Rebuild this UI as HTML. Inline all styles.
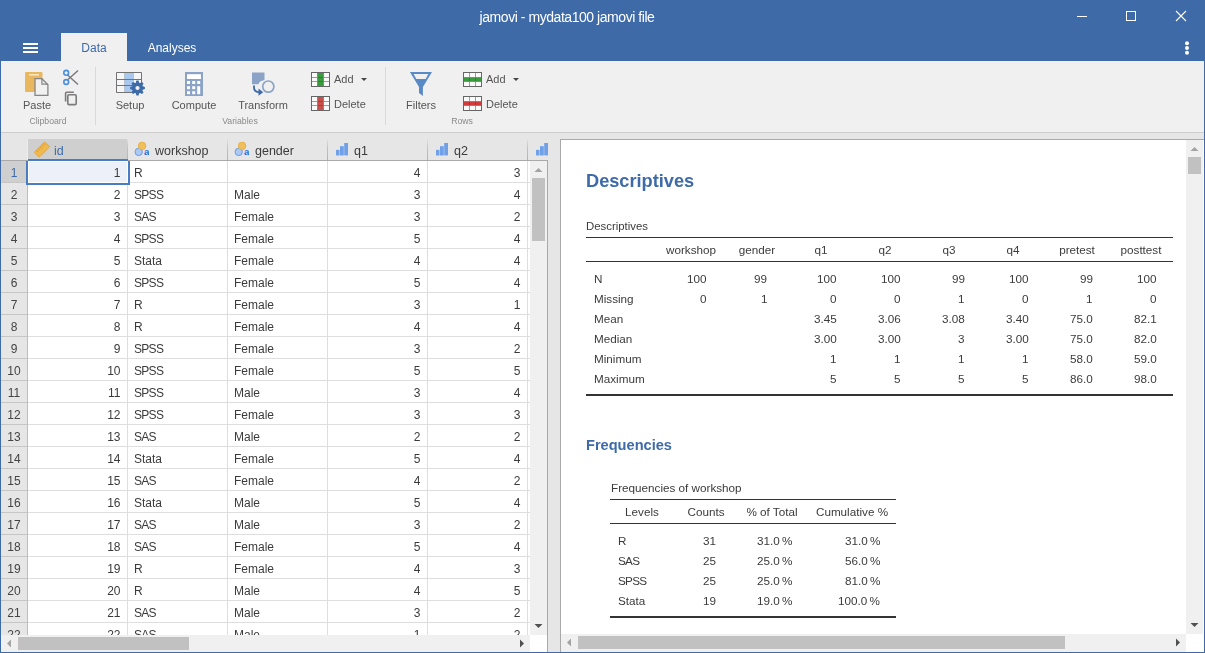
<!DOCTYPE html>
<html><head><meta charset="utf-8"><title>jamovi</title>
<style>
html,body{margin:0;padding:0;}
body{width:1205px;height:653px;overflow:hidden;position:relative;font-family:"Liberation Sans",sans-serif;}
.r{position:absolute;display:block;}
.t{position:absolute;white-space:pre;line-height:0;will-change:transform;}
</style></head><body>
<div class="r" style="left:0px;top:0px;width:1205px;height:653px;background:#3e6ba8;"></div>
<div class="t" style="left:567px;transform:translateX(-50%);top:17px;font-size:14px;color:#fff;font-weight:normal;letter-spacing:-0.45px;">jamovi - mydata100 jamovi file</div>
<div class="r" style="left:1077px;top:16px;width:10px;height:1px;background:#fff;"></div>
<div class="r" style="left:1126px;top:11px;width:10px;height:10px;background:transparent;border:1px solid #fff;box-sizing:border-box;"></div>
<svg class="r" style="left:1175px;top:10px" width="12" height="12" viewBox="0 0 12 12"><path d="M1 1 L11 11 M11 1 L1 11" stroke="#fff" stroke-width="1.1"/></svg>
<svg class="r" style="left:1183px;top:38px" width="8" height="20" viewBox="0 0 8 20"><circle cx="4" cy="5.3" r="2" fill="#fff"/><circle cx="4" cy="10" r="2" fill="#fff"/><circle cx="4" cy="14.8" r="2" fill="#fff"/></svg>
<div class="r" style="left:23px;top:43px;width:15px;height:2px;background:#fff;"></div>
<div class="r" style="left:23px;top:47px;width:15px;height:2px;background:#fff;"></div>
<div class="r" style="left:23px;top:51px;width:15px;height:2px;background:#fff;"></div>
<div class="r" style="left:61px;top:33px;width:66px;height:28px;background:#f0f0f0;"></div>
<div class="t" style="left:94px;transform:translateX(-50%);top:48px;font-size:12px;color:#3e6ba8;font-weight:normal;">Data</div>
<div class="t" style="left:172px;transform:translateX(-50%);top:48px;font-size:12px;color:#fff;font-weight:normal;">Analyses</div>
<div class="r" style="left:1px;top:61px;width:1203px;height:71px;background:#f0f0f0;"></div>
<div class="r" style="left:1px;top:132px;width:1203px;height:1px;background:#cdcdcd;"></div>
<div class="r" style="left:1px;top:133px;width:1203px;height:519px;background:#e6e6e6;"></div>
<div class="r" style="left:95px;top:67px;width:1px;height:58px;background:#d9d9d9;"></div>
<div class="r" style="left:385px;top:67px;width:1px;height:58px;background:#d9d9d9;"></div>
<svg class="r" style="left:24px;top:71px" width="26" height="27" viewBox="0 0 26 27"><rect x="1" y="1" width="17.5" height="20" rx="1" fill="#e9b75e"/><rect x="5" y="3" width="10" height="1.6" fill="#f8e4bd"/><path d="M11 7.7 H17.9 L23.9 13.7 V24.3 H11 Z" fill="#f1f1f1" stroke="#858585" stroke-width="1.3"/><path d="M17.9 7.7 V13.2 H23.9" fill="none" stroke="#858585" stroke-width="1.2"/></svg>
<div class="t" style="left:37px;transform:translateX(-50%);top:105px;font-size:11px;color:#555;font-weight:normal;">Paste</div>
<div class="t" style="left:48px;transform:translateX(-50%);top:121px;font-size:8.7px;color:#8a8a8a;font-weight:normal;">Clipboard</div>
<svg class="r" style="left:62px;top:69px" width="18" height="17" viewBox="0 0 18 17"><path d="M5.5 6 L16 15.5 M5.5 11 L16 1.5" stroke="#777" stroke-width="1.4" fill="none"/><circle cx="4.2" cy="3.8" r="2.4" fill="#f0f0f0" stroke="#4a8fe0" stroke-width="1.6"/><circle cx="4.2" cy="13" r="2.4" fill="#f0f0f0" stroke="#4a8fe0" stroke-width="1.6"/></svg>
<svg class="r" style="left:63px;top:90px" width="16" height="17" viewBox="0 0 16 17"><path d="M2.6 11.4 V3.2 Q2.6 2.2 3.6 2.2 H10.8" fill="none" stroke="#7b7b7b" stroke-width="1.6"/><rect x="4.8" y="4.8" width="8.4" height="9.8" rx="1.2" fill="none" stroke="#7b7b7b" stroke-width="1.6"/></svg>
<svg class="r" style="left:115px;top:71px" width="32" height="27" viewBox="0 0 32 27"><rect x="1.5" y="1.5" width="25" height="20" fill="#f6f6f6"/><path d="M10 1.5 V21.5 M18 1.5 V21.5" fill="none" stroke="#8a8a8a" stroke-width="1"/><rect x="9.7" y="1.5" width="8.6" height="20" fill="#a9c8f0"/><path d="M1.5 1.5 H26.5 V21.5 H1.5 Z M1.5 8.5 H26.5 M1.5 14.5 H26.5" fill="none" stroke="#737373" stroke-width="1"/><g transform="translate(22.5 17)"><circle r="5.4" fill="#3e6ba8"/><path d="M-1.9 -4.5 L-1.1 -7.4 H1.1 L1.9 -4.5 Z" fill="#3e6ba8" transform="rotate(0)"/><path d="M-1.9 -4.5 L-1.1 -7.4 H1.1 L1.9 -4.5 Z" fill="#3e6ba8" transform="rotate(45)"/><path d="M-1.9 -4.5 L-1.1 -7.4 H1.1 L1.9 -4.5 Z" fill="#3e6ba8" transform="rotate(90)"/><path d="M-1.9 -4.5 L-1.1 -7.4 H1.1 L1.9 -4.5 Z" fill="#3e6ba8" transform="rotate(135)"/><path d="M-1.9 -4.5 L-1.1 -7.4 H1.1 L1.9 -4.5 Z" fill="#3e6ba8" transform="rotate(180)"/><path d="M-1.9 -4.5 L-1.1 -7.4 H1.1 L1.9 -4.5 Z" fill="#3e6ba8" transform="rotate(225)"/><path d="M-1.9 -4.5 L-1.1 -7.4 H1.1 L1.9 -4.5 Z" fill="#3e6ba8" transform="rotate(270)"/><path d="M-1.9 -4.5 L-1.1 -7.4 H1.1 L1.9 -4.5 Z" fill="#3e6ba8" transform="rotate(315)"/><circle r="2.1" fill="#f0f0f0"/></g></svg>
<div class="t" style="left:130px;transform:translateX(-50%);top:105px;font-size:11px;color:#555;font-weight:normal;">Setup</div>
<svg class="r" style="left:184px;top:71px" width="20" height="26" viewBox="0 0 20 26"><rect x="1" y="1" width="18" height="24" fill="#8ba3c7"/><rect x="3" y="3.2" width="14" height="4.8" fill="#fff"/><rect x="3" y="10" width="3" height="3" fill="#fff"/><rect x="8.2" y="10" width="3" height="3" fill="#fff"/><rect x="13.2" y="10" width="3" height="3" fill="#fff"/><rect x="3" y="15.2" width="3" height="3" fill="#fff"/><rect x="8.2" y="15.2" width="3" height="3" fill="#fff"/><rect x="13.2" y="15.2" width="3" height="8" fill="#fff"/><rect x="3" y="20.2" width="3" height="3" fill="#fff"/><rect x="8.2" y="20.2" width="3" height="3" fill="#fff"/></svg>
<div class="t" style="left:193.5px;transform:translateX(-50%);top:105px;font-size:11px;color:#555;font-weight:normal;">Compute</div>
<svg class="r" style="left:250px;top:71px" width="26" height="27" viewBox="0 0 26 27"><path d="M2 1.5 H14.5 V9 Q9 10 8.5 13.2 H2 Z" fill="#8ba3c7"/><circle cx="18.3" cy="15.6" r="5.6" fill="#f0f0f0" stroke="#8ba3c7" stroke-width="1.7"/><path d="M4 14.5 V16.5 Q4 21 9.5 21.3" fill="none" stroke="#3e6ba8" stroke-width="1.8"/><path d="M8.5 17.6 L13.2 21.3 L8.5 24.8 Z" fill="#3e6ba8"/></svg>
<div class="t" style="left:262.5px;transform:translateX(-50%);top:105px;font-size:11px;color:#555;font-weight:normal;">Transform</div>
<div class="t" style="left:240px;transform:translateX(-50%);top:121px;font-size:8.7px;color:#8a8a8a;font-weight:normal;">Variables</div>
<svg class="r" style="left:311px;top:72px" width="20" height="16" viewBox="0 0 20 16"><rect x="0.5" y="0.5" width="18" height="14" fill="#fafafa"/><path d="M0.5 5.5 H18.5 M0.5 9.5 H18.5" stroke="#9d9d9d" stroke-width="1"/><rect x="7" y="0.5" width="5" height="14" fill="#3c9b3f"/><path d="M7 5.5 H12 M7 9.5 H12" stroke="rgba(0,0,0,0.2)" stroke-width="1"/><path d="M6.5 0.5 V14.5 M12.5 0.5 V14.5" stroke="#858585" stroke-width="1"/><rect x="0.5" y="0.5" width="18" height="14" fill="none" stroke="#666" stroke-width="1"/></svg>
<div class="t" style="left:333.8px;top:79px;font-size:11px;color:#555;font-weight:normal;">Add</div>
<svg class="r" style="left:361px;top:78px" width="6" height="4" viewBox="0 0 6 4"><path d="M0 0 H6 L3 3 Z" fill="#444"/></svg>
<svg class="r" style="left:311px;top:96px" width="20" height="16" viewBox="0 0 20 16"><rect x="0.5" y="0.5" width="18" height="14" fill="#fafafa"/><path d="M0.5 5.5 H18.5 M0.5 9.5 H18.5" stroke="#9d9d9d" stroke-width="1"/><rect x="7" y="0.5" width="5" height="14" fill="#c9514b"/><path d="M7 5.5 H12 M7 9.5 H12" stroke="rgba(0,0,0,0.2)" stroke-width="1"/><path d="M6.5 0.5 V14.5 M12.5 0.5 V14.5" stroke="#858585" stroke-width="1"/><rect x="0.5" y="0.5" width="18" height="14" fill="none" stroke="#666" stroke-width="1"/></svg>
<div class="t" style="left:333.8px;top:104px;font-size:11px;color:#555;font-weight:normal;">Delete</div>
<svg class="r" style="left:409px;top:71px" width="25" height="27" viewBox="0 0 25 27"><path d="M0.9 0.9 H23 L13.9 15.9 V24.9 L10 22 V15.9 Z" fill="#5a8ac6"/><path d="M4.6 3 H19.3 L16.7 7.9 H7.4 Z" fill="#f0f0f0"/></svg>
<div class="t" style="left:421px;transform:translateX(-50%);top:105px;font-size:11px;color:#555;font-weight:normal;">Filters</div>
<svg class="r" style="left:463px;top:72px" width="20" height="16" viewBox="0 0 20 16"><rect x="0.5" y="0.5" width="18" height="14" fill="#fafafa"/><path d="M6.5 0.5 V14.5 M12.5 0.5 V14.5" stroke="#9d9d9d" stroke-width="1"/><rect x="0.5" y="6" width="18" height="3" fill="#3c9b3f"/><path d="M6.5 6 V9 M12.5 6 V9" stroke="rgba(0,0,0,0.2)" stroke-width="1"/><path d="M0.5 5.5 H18.5 M0.5 9.5 H18.5" stroke="#858585" stroke-width="1"/><rect x="0.5" y="0.5" width="18" height="14" fill="none" stroke="#666" stroke-width="1"/></svg>
<div class="t" style="left:486.4px;top:79px;font-size:11px;color:#555;font-weight:normal;">Add</div>
<svg class="r" style="left:513px;top:78px" width="6" height="4" viewBox="0 0 6 4"><path d="M0 0 H6 L3 3 Z" fill="#444"/></svg>
<svg class="r" style="left:463px;top:96px" width="20" height="16" viewBox="0 0 20 16"><rect x="0.5" y="0.5" width="18" height="14" fill="#fafafa"/><path d="M6.5 0.5 V14.5 M12.5 0.5 V14.5" stroke="#9d9d9d" stroke-width="1"/><rect x="0.5" y="6" width="18" height="3" fill="#d03c3c"/><path d="M6.5 6 V9 M12.5 6 V9" stroke="rgba(0,0,0,0.2)" stroke-width="1"/><path d="M0.5 5.5 H18.5 M0.5 9.5 H18.5" stroke="#858585" stroke-width="1"/><rect x="0.5" y="0.5" width="18" height="14" fill="none" stroke="#666" stroke-width="1"/></svg>
<div class="t" style="left:486.4px;top:104px;font-size:11px;color:#555;font-weight:normal;">Delete</div>
<div class="t" style="left:462px;transform:translateX(-50%);top:121px;font-size:8.7px;color:#8a8a8a;font-weight:normal;">Rows</div>
<div class="r" style="left:1px;top:139px;width:546px;height:21px;background:#e6e6e6;"></div>
<div class="r" style="left:28px;top:139px;width:99px;height:21px;background:#cfcfcf;"></div>
<div class="r" style="left:127px;top:139px;width:1px;height:21px;background:linear-gradient(to bottom,#e2e2e2,#c2c2c2 40%,#b4b4b4);"></div>
<div class="r" style="left:227px;top:139px;width:1px;height:21px;background:linear-gradient(to bottom,#e2e2e2,#c2c2c2 40%,#b4b4b4);"></div>
<div class="r" style="left:327px;top:139px;width:1px;height:21px;background:linear-gradient(to bottom,#e2e2e2,#c2c2c2 40%,#b4b4b4);"></div>
<div class="r" style="left:427px;top:139px;width:1px;height:21px;background:linear-gradient(to bottom,#e2e2e2,#c2c2c2 40%,#b4b4b4);"></div>
<div class="r" style="left:527px;top:139px;width:1px;height:21px;background:linear-gradient(to bottom,#e2e2e2,#c2c2c2 40%,#b4b4b4);"></div>
<div class="r" style="left:1px;top:160px;width:547px;height:1px;background:#a9a9a9;"></div>
<div class="r" style="left:28px;top:161px;width:502px;height:474px;background:#fff;"></div>
<div class="r" style="left:1px;top:161px;width:26px;height:474px;background:#e6e6e6;"></div>
<div class="r" style="left:1px;top:161px;width:26px;height:21px;background:#cfcfcf;"></div>
<div class="r" style="left:27px;top:161px;width:1px;height:474px;background:#bdbdbd;"></div>
<div class="r" style="left:28px;top:182px;width:502px;height:1px;background:#dedede;"></div>
<div class="r" style="left:1px;top:182px;width:26px;height:1px;background:#c6c6c6;"></div>
<div class="r" style="left:28px;top:204px;width:502px;height:1px;background:#dedede;"></div>
<div class="r" style="left:1px;top:204px;width:26px;height:1px;background:#c6c6c6;"></div>
<div class="r" style="left:28px;top:226px;width:502px;height:1px;background:#dedede;"></div>
<div class="r" style="left:1px;top:226px;width:26px;height:1px;background:#c6c6c6;"></div>
<div class="r" style="left:28px;top:248px;width:502px;height:1px;background:#dedede;"></div>
<div class="r" style="left:1px;top:248px;width:26px;height:1px;background:#c6c6c6;"></div>
<div class="r" style="left:28px;top:270px;width:502px;height:1px;background:#dedede;"></div>
<div class="r" style="left:1px;top:270px;width:26px;height:1px;background:#c6c6c6;"></div>
<div class="r" style="left:28px;top:292px;width:502px;height:1px;background:#dedede;"></div>
<div class="r" style="left:1px;top:292px;width:26px;height:1px;background:#c6c6c6;"></div>
<div class="r" style="left:28px;top:314px;width:502px;height:1px;background:#dedede;"></div>
<div class="r" style="left:1px;top:314px;width:26px;height:1px;background:#c6c6c6;"></div>
<div class="r" style="left:28px;top:336px;width:502px;height:1px;background:#dedede;"></div>
<div class="r" style="left:1px;top:336px;width:26px;height:1px;background:#c6c6c6;"></div>
<div class="r" style="left:28px;top:358px;width:502px;height:1px;background:#dedede;"></div>
<div class="r" style="left:1px;top:358px;width:26px;height:1px;background:#c6c6c6;"></div>
<div class="r" style="left:28px;top:380px;width:502px;height:1px;background:#dedede;"></div>
<div class="r" style="left:1px;top:380px;width:26px;height:1px;background:#c6c6c6;"></div>
<div class="r" style="left:28px;top:402px;width:502px;height:1px;background:#dedede;"></div>
<div class="r" style="left:1px;top:402px;width:26px;height:1px;background:#c6c6c6;"></div>
<div class="r" style="left:28px;top:424px;width:502px;height:1px;background:#dedede;"></div>
<div class="r" style="left:1px;top:424px;width:26px;height:1px;background:#c6c6c6;"></div>
<div class="r" style="left:28px;top:446px;width:502px;height:1px;background:#dedede;"></div>
<div class="r" style="left:1px;top:446px;width:26px;height:1px;background:#c6c6c6;"></div>
<div class="r" style="left:28px;top:468px;width:502px;height:1px;background:#dedede;"></div>
<div class="r" style="left:1px;top:468px;width:26px;height:1px;background:#c6c6c6;"></div>
<div class="r" style="left:28px;top:490px;width:502px;height:1px;background:#dedede;"></div>
<div class="r" style="left:1px;top:490px;width:26px;height:1px;background:#c6c6c6;"></div>
<div class="r" style="left:28px;top:512px;width:502px;height:1px;background:#dedede;"></div>
<div class="r" style="left:1px;top:512px;width:26px;height:1px;background:#c6c6c6;"></div>
<div class="r" style="left:28px;top:534px;width:502px;height:1px;background:#dedede;"></div>
<div class="r" style="left:1px;top:534px;width:26px;height:1px;background:#c6c6c6;"></div>
<div class="r" style="left:28px;top:556px;width:502px;height:1px;background:#dedede;"></div>
<div class="r" style="left:1px;top:556px;width:26px;height:1px;background:#c6c6c6;"></div>
<div class="r" style="left:28px;top:578px;width:502px;height:1px;background:#dedede;"></div>
<div class="r" style="left:1px;top:578px;width:26px;height:1px;background:#c6c6c6;"></div>
<div class="r" style="left:28px;top:600px;width:502px;height:1px;background:#dedede;"></div>
<div class="r" style="left:1px;top:600px;width:26px;height:1px;background:#c6c6c6;"></div>
<div class="r" style="left:28px;top:622px;width:502px;height:1px;background:#dedede;"></div>
<div class="r" style="left:1px;top:622px;width:26px;height:1px;background:#c6c6c6;"></div>
<div class="r" style="left:28px;top:644px;width:502px;height:1px;background:#dedede;"></div>
<div class="r" style="left:1px;top:644px;width:26px;height:1px;background:#c6c6c6;"></div>
<div class="r" style="left:127px;top:161px;width:1px;height:474px;background:#dedede;"></div>
<div class="r" style="left:227px;top:161px;width:1px;height:474px;background:#dedede;"></div>
<div class="r" style="left:327px;top:161px;width:1px;height:474px;background:#dedede;"></div>
<div class="r" style="left:427px;top:161px;width:1px;height:474px;background:#dedede;"></div>
<div class="r" style="left:527px;top:161px;width:1px;height:474px;background:#dedede;"></div>
<div class="r" style="left:28px;top:161px;width:99px;height:21px;background:#ebf0f9;"></div>
<div class="r" style="left:28px;top:159px;width:100px;height:2px;background:#4a7cc4;"></div>
<div class="r" style="left:26px;top:161px;width:2px;height:24px;background:#4a7cc4;"></div>
<div class="r" style="left:26px;top:183px;width:104px;height:2px;background:#4a7cc4;"></div>
<div class="r" style="left:128px;top:161px;width:2px;height:24px;background:#4a7cc4;"></div>
<div class="r" style="left:27px;top:139px;width:1px;height:21px;background:#ececec;"></div>
<div class="r" style="left:28px;top:161px;width:100px;height:22px;border:1px solid #fff;box-sizing:border-box;"></div>
<div class="r" style="left:0;top:161px;width:530px;height:474px;overflow:hidden">
<div class="t" style="left:14px;transform:translateX(-50%);top:12px;font-size:12px;color:#3e6ba8;font-weight:normal;">1</div>
<div class="t" style="right:1084.5px;top:12px;font-size:12px;color:#3b3b3b;font-weight:normal;right:auto;left:0;width:120.5px;text-align:right;">1</div>
<div class="t" style="left:133.8px;top:12px;font-size:12px;color:#3b3b3b;font-weight:normal;">R</div>
<div class="t" style="right:784.5px;top:12px;font-size:12px;color:#3b3b3b;font-weight:normal;right:auto;left:0;width:420.5px;text-align:right;">4</div>
<div class="t" style="right:684.5px;top:12px;font-size:12px;color:#3b3b3b;font-weight:normal;right:auto;left:0;width:520.5px;text-align:right;">3</div>
<div class="t" style="left:14px;transform:translateX(-50%);top:34px;font-size:12px;color:#444;font-weight:normal;">2</div>
<div class="t" style="right:1084.5px;top:34px;font-size:12px;color:#3b3b3b;font-weight:normal;right:auto;left:0;width:120.5px;text-align:right;">2</div>
<div class="t" style="left:133.8px;top:34px;font-size:12px;color:#3b3b3b;font-weight:normal;letter-spacing:-0.7px;">SPSS</div>
<div class="t" style="left:233.8px;top:34px;font-size:12px;color:#3b3b3b;font-weight:normal;">Male</div>
<div class="t" style="right:784.5px;top:34px;font-size:12px;color:#3b3b3b;font-weight:normal;right:auto;left:0;width:420.5px;text-align:right;">3</div>
<div class="t" style="right:684.5px;top:34px;font-size:12px;color:#3b3b3b;font-weight:normal;right:auto;left:0;width:520.5px;text-align:right;">4</div>
<div class="t" style="left:14px;transform:translateX(-50%);top:56px;font-size:12px;color:#444;font-weight:normal;">3</div>
<div class="t" style="right:1084.5px;top:56px;font-size:12px;color:#3b3b3b;font-weight:normal;right:auto;left:0;width:120.5px;text-align:right;">3</div>
<div class="t" style="left:133.8px;top:56px;font-size:12px;color:#3b3b3b;font-weight:normal;letter-spacing:-0.7px;">SAS</div>
<div class="t" style="left:233.8px;top:56px;font-size:12px;color:#3b3b3b;font-weight:normal;">Female</div>
<div class="t" style="right:784.5px;top:56px;font-size:12px;color:#3b3b3b;font-weight:normal;right:auto;left:0;width:420.5px;text-align:right;">3</div>
<div class="t" style="right:684.5px;top:56px;font-size:12px;color:#3b3b3b;font-weight:normal;right:auto;left:0;width:520.5px;text-align:right;">2</div>
<div class="t" style="left:14px;transform:translateX(-50%);top:78px;font-size:12px;color:#444;font-weight:normal;">4</div>
<div class="t" style="right:1084.5px;top:78px;font-size:12px;color:#3b3b3b;font-weight:normal;right:auto;left:0;width:120.5px;text-align:right;">4</div>
<div class="t" style="left:133.8px;top:78px;font-size:12px;color:#3b3b3b;font-weight:normal;letter-spacing:-0.7px;">SPSS</div>
<div class="t" style="left:233.8px;top:78px;font-size:12px;color:#3b3b3b;font-weight:normal;">Female</div>
<div class="t" style="right:784.5px;top:78px;font-size:12px;color:#3b3b3b;font-weight:normal;right:auto;left:0;width:420.5px;text-align:right;">5</div>
<div class="t" style="right:684.5px;top:78px;font-size:12px;color:#3b3b3b;font-weight:normal;right:auto;left:0;width:520.5px;text-align:right;">4</div>
<div class="t" style="left:14px;transform:translateX(-50%);top:100px;font-size:12px;color:#444;font-weight:normal;">5</div>
<div class="t" style="right:1084.5px;top:100px;font-size:12px;color:#3b3b3b;font-weight:normal;right:auto;left:0;width:120.5px;text-align:right;">5</div>
<div class="t" style="left:133.8px;top:100px;font-size:12px;color:#3b3b3b;font-weight:normal;">Stata</div>
<div class="t" style="left:233.8px;top:100px;font-size:12px;color:#3b3b3b;font-weight:normal;">Female</div>
<div class="t" style="right:784.5px;top:100px;font-size:12px;color:#3b3b3b;font-weight:normal;right:auto;left:0;width:420.5px;text-align:right;">4</div>
<div class="t" style="right:684.5px;top:100px;font-size:12px;color:#3b3b3b;font-weight:normal;right:auto;left:0;width:520.5px;text-align:right;">4</div>
<div class="t" style="left:14px;transform:translateX(-50%);top:122px;font-size:12px;color:#444;font-weight:normal;">6</div>
<div class="t" style="right:1084.5px;top:122px;font-size:12px;color:#3b3b3b;font-weight:normal;right:auto;left:0;width:120.5px;text-align:right;">6</div>
<div class="t" style="left:133.8px;top:122px;font-size:12px;color:#3b3b3b;font-weight:normal;letter-spacing:-0.7px;">SPSS</div>
<div class="t" style="left:233.8px;top:122px;font-size:12px;color:#3b3b3b;font-weight:normal;">Female</div>
<div class="t" style="right:784.5px;top:122px;font-size:12px;color:#3b3b3b;font-weight:normal;right:auto;left:0;width:420.5px;text-align:right;">5</div>
<div class="t" style="right:684.5px;top:122px;font-size:12px;color:#3b3b3b;font-weight:normal;right:auto;left:0;width:520.5px;text-align:right;">4</div>
<div class="t" style="left:14px;transform:translateX(-50%);top:144px;font-size:12px;color:#444;font-weight:normal;">7</div>
<div class="t" style="right:1084.5px;top:144px;font-size:12px;color:#3b3b3b;font-weight:normal;right:auto;left:0;width:120.5px;text-align:right;">7</div>
<div class="t" style="left:133.8px;top:144px;font-size:12px;color:#3b3b3b;font-weight:normal;">R</div>
<div class="t" style="left:233.8px;top:144px;font-size:12px;color:#3b3b3b;font-weight:normal;">Female</div>
<div class="t" style="right:784.5px;top:144px;font-size:12px;color:#3b3b3b;font-weight:normal;right:auto;left:0;width:420.5px;text-align:right;">3</div>
<div class="t" style="right:684.5px;top:144px;font-size:12px;color:#3b3b3b;font-weight:normal;right:auto;left:0;width:520.5px;text-align:right;">1</div>
<div class="t" style="left:14px;transform:translateX(-50%);top:166px;font-size:12px;color:#444;font-weight:normal;">8</div>
<div class="t" style="right:1084.5px;top:166px;font-size:12px;color:#3b3b3b;font-weight:normal;right:auto;left:0;width:120.5px;text-align:right;">8</div>
<div class="t" style="left:133.8px;top:166px;font-size:12px;color:#3b3b3b;font-weight:normal;">R</div>
<div class="t" style="left:233.8px;top:166px;font-size:12px;color:#3b3b3b;font-weight:normal;">Female</div>
<div class="t" style="right:784.5px;top:166px;font-size:12px;color:#3b3b3b;font-weight:normal;right:auto;left:0;width:420.5px;text-align:right;">4</div>
<div class="t" style="right:684.5px;top:166px;font-size:12px;color:#3b3b3b;font-weight:normal;right:auto;left:0;width:520.5px;text-align:right;">4</div>
<div class="t" style="left:14px;transform:translateX(-50%);top:188px;font-size:12px;color:#444;font-weight:normal;">9</div>
<div class="t" style="right:1084.5px;top:188px;font-size:12px;color:#3b3b3b;font-weight:normal;right:auto;left:0;width:120.5px;text-align:right;">9</div>
<div class="t" style="left:133.8px;top:188px;font-size:12px;color:#3b3b3b;font-weight:normal;letter-spacing:-0.7px;">SPSS</div>
<div class="t" style="left:233.8px;top:188px;font-size:12px;color:#3b3b3b;font-weight:normal;">Female</div>
<div class="t" style="right:784.5px;top:188px;font-size:12px;color:#3b3b3b;font-weight:normal;right:auto;left:0;width:420.5px;text-align:right;">3</div>
<div class="t" style="right:684.5px;top:188px;font-size:12px;color:#3b3b3b;font-weight:normal;right:auto;left:0;width:520.5px;text-align:right;">2</div>
<div class="t" style="left:14px;transform:translateX(-50%);top:210px;font-size:12px;color:#444;font-weight:normal;">10</div>
<div class="t" style="right:1084.5px;top:210px;font-size:12px;color:#3b3b3b;font-weight:normal;right:auto;left:0;width:120.5px;text-align:right;">10</div>
<div class="t" style="left:133.8px;top:210px;font-size:12px;color:#3b3b3b;font-weight:normal;letter-spacing:-0.7px;">SPSS</div>
<div class="t" style="left:233.8px;top:210px;font-size:12px;color:#3b3b3b;font-weight:normal;">Female</div>
<div class="t" style="right:784.5px;top:210px;font-size:12px;color:#3b3b3b;font-weight:normal;right:auto;left:0;width:420.5px;text-align:right;">5</div>
<div class="t" style="right:684.5px;top:210px;font-size:12px;color:#3b3b3b;font-weight:normal;right:auto;left:0;width:520.5px;text-align:right;">5</div>
<div class="t" style="left:14px;transform:translateX(-50%);top:232px;font-size:12px;color:#444;font-weight:normal;">11</div>
<div class="t" style="right:1084.5px;top:232px;font-size:12px;color:#3b3b3b;font-weight:normal;right:auto;left:0;width:120.5px;text-align:right;">11</div>
<div class="t" style="left:133.8px;top:232px;font-size:12px;color:#3b3b3b;font-weight:normal;letter-spacing:-0.7px;">SPSS</div>
<div class="t" style="left:233.8px;top:232px;font-size:12px;color:#3b3b3b;font-weight:normal;">Male</div>
<div class="t" style="right:784.5px;top:232px;font-size:12px;color:#3b3b3b;font-weight:normal;right:auto;left:0;width:420.5px;text-align:right;">3</div>
<div class="t" style="right:684.5px;top:232px;font-size:12px;color:#3b3b3b;font-weight:normal;right:auto;left:0;width:520.5px;text-align:right;">4</div>
<div class="t" style="left:14px;transform:translateX(-50%);top:254px;font-size:12px;color:#444;font-weight:normal;">12</div>
<div class="t" style="right:1084.5px;top:254px;font-size:12px;color:#3b3b3b;font-weight:normal;right:auto;left:0;width:120.5px;text-align:right;">12</div>
<div class="t" style="left:133.8px;top:254px;font-size:12px;color:#3b3b3b;font-weight:normal;letter-spacing:-0.7px;">SPSS</div>
<div class="t" style="left:233.8px;top:254px;font-size:12px;color:#3b3b3b;font-weight:normal;">Female</div>
<div class="t" style="right:784.5px;top:254px;font-size:12px;color:#3b3b3b;font-weight:normal;right:auto;left:0;width:420.5px;text-align:right;">3</div>
<div class="t" style="right:684.5px;top:254px;font-size:12px;color:#3b3b3b;font-weight:normal;right:auto;left:0;width:520.5px;text-align:right;">3</div>
<div class="t" style="left:14px;transform:translateX(-50%);top:276px;font-size:12px;color:#444;font-weight:normal;">13</div>
<div class="t" style="right:1084.5px;top:276px;font-size:12px;color:#3b3b3b;font-weight:normal;right:auto;left:0;width:120.5px;text-align:right;">13</div>
<div class="t" style="left:133.8px;top:276px;font-size:12px;color:#3b3b3b;font-weight:normal;letter-spacing:-0.7px;">SAS</div>
<div class="t" style="left:233.8px;top:276px;font-size:12px;color:#3b3b3b;font-weight:normal;">Male</div>
<div class="t" style="right:784.5px;top:276px;font-size:12px;color:#3b3b3b;font-weight:normal;right:auto;left:0;width:420.5px;text-align:right;">2</div>
<div class="t" style="right:684.5px;top:276px;font-size:12px;color:#3b3b3b;font-weight:normal;right:auto;left:0;width:520.5px;text-align:right;">2</div>
<div class="t" style="left:14px;transform:translateX(-50%);top:298px;font-size:12px;color:#444;font-weight:normal;">14</div>
<div class="t" style="right:1084.5px;top:298px;font-size:12px;color:#3b3b3b;font-weight:normal;right:auto;left:0;width:120.5px;text-align:right;">14</div>
<div class="t" style="left:133.8px;top:298px;font-size:12px;color:#3b3b3b;font-weight:normal;">Stata</div>
<div class="t" style="left:233.8px;top:298px;font-size:12px;color:#3b3b3b;font-weight:normal;">Female</div>
<div class="t" style="right:784.5px;top:298px;font-size:12px;color:#3b3b3b;font-weight:normal;right:auto;left:0;width:420.5px;text-align:right;">5</div>
<div class="t" style="right:684.5px;top:298px;font-size:12px;color:#3b3b3b;font-weight:normal;right:auto;left:0;width:520.5px;text-align:right;">4</div>
<div class="t" style="left:14px;transform:translateX(-50%);top:320px;font-size:12px;color:#444;font-weight:normal;">15</div>
<div class="t" style="right:1084.5px;top:320px;font-size:12px;color:#3b3b3b;font-weight:normal;right:auto;left:0;width:120.5px;text-align:right;">15</div>
<div class="t" style="left:133.8px;top:320px;font-size:12px;color:#3b3b3b;font-weight:normal;letter-spacing:-0.7px;">SAS</div>
<div class="t" style="left:233.8px;top:320px;font-size:12px;color:#3b3b3b;font-weight:normal;">Female</div>
<div class="t" style="right:784.5px;top:320px;font-size:12px;color:#3b3b3b;font-weight:normal;right:auto;left:0;width:420.5px;text-align:right;">4</div>
<div class="t" style="right:684.5px;top:320px;font-size:12px;color:#3b3b3b;font-weight:normal;right:auto;left:0;width:520.5px;text-align:right;">2</div>
<div class="t" style="left:14px;transform:translateX(-50%);top:342px;font-size:12px;color:#444;font-weight:normal;">16</div>
<div class="t" style="right:1084.5px;top:342px;font-size:12px;color:#3b3b3b;font-weight:normal;right:auto;left:0;width:120.5px;text-align:right;">16</div>
<div class="t" style="left:133.8px;top:342px;font-size:12px;color:#3b3b3b;font-weight:normal;">Stata</div>
<div class="t" style="left:233.8px;top:342px;font-size:12px;color:#3b3b3b;font-weight:normal;">Male</div>
<div class="t" style="right:784.5px;top:342px;font-size:12px;color:#3b3b3b;font-weight:normal;right:auto;left:0;width:420.5px;text-align:right;">5</div>
<div class="t" style="right:684.5px;top:342px;font-size:12px;color:#3b3b3b;font-weight:normal;right:auto;left:0;width:520.5px;text-align:right;">4</div>
<div class="t" style="left:14px;transform:translateX(-50%);top:364px;font-size:12px;color:#444;font-weight:normal;">17</div>
<div class="t" style="right:1084.5px;top:364px;font-size:12px;color:#3b3b3b;font-weight:normal;right:auto;left:0;width:120.5px;text-align:right;">17</div>
<div class="t" style="left:133.8px;top:364px;font-size:12px;color:#3b3b3b;font-weight:normal;letter-spacing:-0.7px;">SAS</div>
<div class="t" style="left:233.8px;top:364px;font-size:12px;color:#3b3b3b;font-weight:normal;">Male</div>
<div class="t" style="right:784.5px;top:364px;font-size:12px;color:#3b3b3b;font-weight:normal;right:auto;left:0;width:420.5px;text-align:right;">3</div>
<div class="t" style="right:684.5px;top:364px;font-size:12px;color:#3b3b3b;font-weight:normal;right:auto;left:0;width:520.5px;text-align:right;">2</div>
<div class="t" style="left:14px;transform:translateX(-50%);top:386px;font-size:12px;color:#444;font-weight:normal;">18</div>
<div class="t" style="right:1084.5px;top:386px;font-size:12px;color:#3b3b3b;font-weight:normal;right:auto;left:0;width:120.5px;text-align:right;">18</div>
<div class="t" style="left:133.8px;top:386px;font-size:12px;color:#3b3b3b;font-weight:normal;letter-spacing:-0.7px;">SAS</div>
<div class="t" style="left:233.8px;top:386px;font-size:12px;color:#3b3b3b;font-weight:normal;">Female</div>
<div class="t" style="right:784.5px;top:386px;font-size:12px;color:#3b3b3b;font-weight:normal;right:auto;left:0;width:420.5px;text-align:right;">5</div>
<div class="t" style="right:684.5px;top:386px;font-size:12px;color:#3b3b3b;font-weight:normal;right:auto;left:0;width:520.5px;text-align:right;">4</div>
<div class="t" style="left:14px;transform:translateX(-50%);top:408px;font-size:12px;color:#444;font-weight:normal;">19</div>
<div class="t" style="right:1084.5px;top:408px;font-size:12px;color:#3b3b3b;font-weight:normal;right:auto;left:0;width:120.5px;text-align:right;">19</div>
<div class="t" style="left:133.8px;top:408px;font-size:12px;color:#3b3b3b;font-weight:normal;">R</div>
<div class="t" style="left:233.8px;top:408px;font-size:12px;color:#3b3b3b;font-weight:normal;">Female</div>
<div class="t" style="right:784.5px;top:408px;font-size:12px;color:#3b3b3b;font-weight:normal;right:auto;left:0;width:420.5px;text-align:right;">4</div>
<div class="t" style="right:684.5px;top:408px;font-size:12px;color:#3b3b3b;font-weight:normal;right:auto;left:0;width:520.5px;text-align:right;">3</div>
<div class="t" style="left:14px;transform:translateX(-50%);top:430px;font-size:12px;color:#444;font-weight:normal;">20</div>
<div class="t" style="right:1084.5px;top:430px;font-size:12px;color:#3b3b3b;font-weight:normal;right:auto;left:0;width:120.5px;text-align:right;">20</div>
<div class="t" style="left:133.8px;top:430px;font-size:12px;color:#3b3b3b;font-weight:normal;">R</div>
<div class="t" style="left:233.8px;top:430px;font-size:12px;color:#3b3b3b;font-weight:normal;">Male</div>
<div class="t" style="right:784.5px;top:430px;font-size:12px;color:#3b3b3b;font-weight:normal;right:auto;left:0;width:420.5px;text-align:right;">4</div>
<div class="t" style="right:684.5px;top:430px;font-size:12px;color:#3b3b3b;font-weight:normal;right:auto;left:0;width:520.5px;text-align:right;">5</div>
<div class="t" style="left:14px;transform:translateX(-50%);top:452px;font-size:12px;color:#444;font-weight:normal;">21</div>
<div class="t" style="right:1084.5px;top:452px;font-size:12px;color:#3b3b3b;font-weight:normal;right:auto;left:0;width:120.5px;text-align:right;">21</div>
<div class="t" style="left:133.8px;top:452px;font-size:12px;color:#3b3b3b;font-weight:normal;letter-spacing:-0.7px;">SAS</div>
<div class="t" style="left:233.8px;top:452px;font-size:12px;color:#3b3b3b;font-weight:normal;">Male</div>
<div class="t" style="right:784.5px;top:452px;font-size:12px;color:#3b3b3b;font-weight:normal;right:auto;left:0;width:420.5px;text-align:right;">3</div>
<div class="t" style="right:684.5px;top:452px;font-size:12px;color:#3b3b3b;font-weight:normal;right:auto;left:0;width:520.5px;text-align:right;">2</div>
<div class="t" style="left:14px;transform:translateX(-50%);top:474px;font-size:12px;color:#444;font-weight:normal;">22</div>
<div class="t" style="right:1084.5px;top:474px;font-size:12px;color:#3b3b3b;font-weight:normal;right:auto;left:0;width:120.5px;text-align:right;">22</div>
<div class="t" style="left:133.8px;top:474px;font-size:12px;color:#3b3b3b;font-weight:normal;letter-spacing:-0.7px;">SAS</div>
<div class="t" style="left:233.8px;top:474px;font-size:12px;color:#3b3b3b;font-weight:normal;">Male</div>
<div class="t" style="right:784.5px;top:474px;font-size:12px;color:#3b3b3b;font-weight:normal;right:auto;left:0;width:420.5px;text-align:right;">1</div>
<div class="t" style="right:684.5px;top:474px;font-size:12px;color:#3b3b3b;font-weight:normal;right:auto;left:0;width:520.5px;text-align:right;">2</div>
</div>
<svg class="r" style="left:33px;top:141px" width="18" height="17" viewBox="0 0 18 17"><g transform="rotate(-45 9 8.5)"><rect x="1.5" y="5" width="15" height="7" rx="0.8" fill="#f0b94f" stroke="#e3a235" stroke-width="0.8"/><path d="M4.5 5 V8 M7 5 V7.5 M9.5 5 V8 M12 5 V7.5 M14.5 5 V8" stroke="#d9962a" stroke-width="0.9"/></g></svg>
<div class="t" style="left:53.5px;top:151px;font-size:12.5px;color:#3e6ba8;font-weight:normal;">id</div>
<svg class="r" style="left:133px;top:140px" width="16" height="18" viewBox="0 0 16 18"><circle cx="5.7" cy="11.9" r="3.7" fill="#abc9f2" stroke="#5d97e8" stroke-width="0.9"/><circle cx="9.1" cy="5.9" r="3.8" fill="#f0be5b" stroke="#e6ac40" stroke-width="0.8"/><text x="10.9" y="14.9" font-family="Liberation Sans" font-size="9.5" font-weight="bold" fill="#1f6be0">a</text></svg>
<div class="t" style="left:154.5px;top:151px;font-size:12.5px;color:#3b3b3b;font-weight:normal;">workshop</div>
<svg class="r" style="left:233px;top:140px" width="16" height="18" viewBox="0 0 16 18"><circle cx="5.7" cy="11.9" r="3.7" fill="#abc9f2" stroke="#5d97e8" stroke-width="0.9"/><circle cx="9.1" cy="5.9" r="3.8" fill="#f0be5b" stroke="#e6ac40" stroke-width="0.8"/><text x="10.9" y="14.9" font-family="Liberation Sans" font-size="9.5" font-weight="bold" fill="#1f6be0">a</text></svg>
<div class="t" style="left:254.5px;top:151px;font-size:12.5px;color:#3b3b3b;font-weight:normal;">gender</div>
<svg class="r" style="left:336px;top:142px" width="14" height="14" viewBox="0 0 14 14"><rect x="0" y="7.9" width="3.5" height="5.6" fill="#70a1e8"/><rect x="4" y="4.2" width="3.8" height="9.3" fill="#70a1e8"/><rect x="8.2" y="1" width="3.8" height="12.4" fill="#70a1e8"/></svg>
<div class="t" style="left:354px;top:151px;font-size:12.5px;color:#3b3b3b;font-weight:normal;">q1</div>
<svg class="r" style="left:436px;top:142px" width="14" height="14" viewBox="0 0 14 14"><rect x="0" y="7.9" width="3.5" height="5.6" fill="#70a1e8"/><rect x="4" y="4.2" width="3.8" height="9.3" fill="#70a1e8"/><rect x="8.2" y="1" width="3.8" height="12.4" fill="#70a1e8"/></svg>
<div class="t" style="left:454px;top:151px;font-size:12.5px;color:#3b3b3b;font-weight:normal;">q2</div>
<svg class="r" style="left:536px;top:142px" width="14" height="14" viewBox="0 0 14 14"><rect x="0" y="7.9" width="3.5" height="5.6" fill="#70a1e8"/><rect x="4" y="4.2" width="3.8" height="9.3" fill="#70a1e8"/><rect x="8.2" y="1" width="3.8" height="12.4" fill="#70a1e8"/></svg>
<div class="r" style="left:530px;top:161px;width:17px;height:474px;background:#f0f0f0;"></div>
<div class="r" style="left:547px;top:160px;width:1px;height:492px;background:#a9a9a9;"></div>
<div class="r" style="left:532px;top:178px;width:13px;height:63px;background:#c1c1c1;"></div>
<svg class="r" style="left:534px;top:167px" width="9" height="6" viewBox="0 0 9 6"><path d="M0.5 5 L4.5 1 L8.5 5 Z" fill="#a3a3a3"/></svg>
<svg class="r" style="left:534px;top:623px" width="9" height="6" viewBox="0 0 9 6"><path d="M0.5 1 L4.5 5 L8.5 1 Z" fill="#505050"/></svg>
<div class="r" style="left:1px;top:635px;width:529px;height:17px;background:#f0f0f0;"></div>
<div class="r" style="left:530px;top:635px;width:17px;height:17px;background:#fff;"></div>
<div class="r" style="left:18px;top:637px;width:171px;height:13px;background:#c1c1c1;"></div>
<svg class="r" style="left:6px;top:639px" width="6" height="10" viewBox="0 0 6 10"><path d="M5 0.5 L1 4.5 L5 8.5 Z" fill="#a3a3a3"/></svg>
<svg class="r" style="left:519px;top:639px" width="6" height="10" viewBox="0 0 6 10"><path d="M1 0.5 L5 4.5 L1 8.5 Z" fill="#505050"/></svg>
<div class="r" style="left:560px;top:139px;width:644px;height:513px;background:#fff;border-left:1px solid #a9a9a9;border-top:1px solid #a9a9a9;box-sizing:border-box;"></div>
<div class="t" style="left:586px;top:181px;font-size:18.2px;color:#3e6ba8;font-weight:bold;">Descriptives</div>
<div class="t" style="left:585.8px;top:226px;font-size:11.4px;color:#3b3b3b;font-weight:normal;">Descriptives</div>
<div class="r" style="left:586px;top:237px;width:587px;height:1px;background:#333;"></div>
<div class="t" style="left:690.7px;transform:translateX(-50%);top:250px;font-size:11.7px;color:#3b3b3b;font-weight:normal;">workshop</div>
<div class="t" style="left:757px;transform:translateX(-50%);top:250px;font-size:11.7px;color:#3b3b3b;font-weight:normal;">gender</div>
<div class="t" style="left:820.6px;transform:translateX(-50%);top:250px;font-size:11.7px;color:#3b3b3b;font-weight:normal;">q1</div>
<div class="t" style="left:885px;transform:translateX(-50%);top:250px;font-size:11.7px;color:#3b3b3b;font-weight:normal;">q2</div>
<div class="t" style="left:948.8px;transform:translateX(-50%);top:250px;font-size:11.7px;color:#3b3b3b;font-weight:normal;">q3</div>
<div class="t" style="left:1013.2px;transform:translateX(-50%);top:250px;font-size:11.7px;color:#3b3b3b;font-weight:normal;">q4</div>
<div class="t" style="left:1076.8px;transform:translateX(-50%);top:250px;font-size:11.7px;color:#3b3b3b;font-weight:normal;">pretest</div>
<div class="t" style="left:1141.2px;transform:translateX(-50%);top:250px;font-size:11.7px;color:#3b3b3b;font-weight:normal;">posttest</div>
<div class="r" style="left:586px;top:261px;width:587px;height:1px;background:#333;"></div>
<div class="t" style="left:593.6px;top:279px;font-size:11.7px;color:#3b3b3b;font-weight:normal;">N</div>
<div class="t" style="right:498px;top:279px;font-size:11.7px;color:#3b3b3b;font-weight:normal;">100</div>
<div class="t" style="right:437.5px;top:279px;font-size:11.7px;color:#3b3b3b;font-weight:normal;">99</div>
<div class="t" style="right:368px;top:279px;font-size:11.7px;color:#3b3b3b;font-weight:normal;">100</div>
<div class="t" style="right:304px;top:279px;font-size:11.7px;color:#3b3b3b;font-weight:normal;">100</div>
<div class="t" style="right:240.39999999999998px;top:279px;font-size:11.7px;color:#3b3b3b;font-weight:normal;">99</div>
<div class="t" style="right:176px;top:279px;font-size:11.7px;color:#3b3b3b;font-weight:normal;">100</div>
<div class="t" style="right:112px;top:279px;font-size:11.7px;color:#3b3b3b;font-weight:normal;">99</div>
<div class="t" style="right:48px;top:279px;font-size:11.7px;color:#3b3b3b;font-weight:normal;">100</div>
<div class="t" style="left:593.6px;top:299px;font-size:11.7px;color:#3b3b3b;font-weight:normal;">Missing</div>
<div class="t" style="right:498px;top:299px;font-size:11.7px;color:#3b3b3b;font-weight:normal;">0</div>
<div class="t" style="right:437.5px;top:299px;font-size:11.7px;color:#3b3b3b;font-weight:normal;">1</div>
<div class="t" style="right:368px;top:299px;font-size:11.7px;color:#3b3b3b;font-weight:normal;">0</div>
<div class="t" style="right:304px;top:299px;font-size:11.7px;color:#3b3b3b;font-weight:normal;">0</div>
<div class="t" style="right:240.39999999999998px;top:299px;font-size:11.7px;color:#3b3b3b;font-weight:normal;">1</div>
<div class="t" style="right:176px;top:299px;font-size:11.7px;color:#3b3b3b;font-weight:normal;">0</div>
<div class="t" style="right:112px;top:299px;font-size:11.7px;color:#3b3b3b;font-weight:normal;">1</div>
<div class="t" style="right:48px;top:299px;font-size:11.7px;color:#3b3b3b;font-weight:normal;">0</div>
<div class="t" style="left:593.6px;top:319px;font-size:11.7px;color:#3b3b3b;font-weight:normal;">Mean</div>
<div class="t" style="right:368px;top:319px;font-size:11.7px;color:#3b3b3b;font-weight:normal;">3.45</div>
<div class="t" style="right:304px;top:319px;font-size:11.7px;color:#3b3b3b;font-weight:normal;">3.06</div>
<div class="t" style="right:240.39999999999998px;top:319px;font-size:11.7px;color:#3b3b3b;font-weight:normal;">3.08</div>
<div class="t" style="right:176px;top:319px;font-size:11.7px;color:#3b3b3b;font-weight:normal;">3.40</div>
<div class="t" style="right:112px;top:319px;font-size:11.7px;color:#3b3b3b;font-weight:normal;">75.0</div>
<div class="t" style="right:48px;top:319px;font-size:11.7px;color:#3b3b3b;font-weight:normal;">82.1</div>
<div class="t" style="left:593.6px;top:339px;font-size:11.7px;color:#3b3b3b;font-weight:normal;">Median</div>
<div class="t" style="right:368px;top:339px;font-size:11.7px;color:#3b3b3b;font-weight:normal;">3.00</div>
<div class="t" style="right:304px;top:339px;font-size:11.7px;color:#3b3b3b;font-weight:normal;">3.00</div>
<div class="t" style="right:240.39999999999998px;top:339px;font-size:11.7px;color:#3b3b3b;font-weight:normal;">3</div>
<div class="t" style="right:176px;top:339px;font-size:11.7px;color:#3b3b3b;font-weight:normal;">3.00</div>
<div class="t" style="right:112px;top:339px;font-size:11.7px;color:#3b3b3b;font-weight:normal;">75.0</div>
<div class="t" style="right:48px;top:339px;font-size:11.7px;color:#3b3b3b;font-weight:normal;">82.0</div>
<div class="t" style="left:593.6px;top:359px;font-size:11.7px;color:#3b3b3b;font-weight:normal;">Minimum</div>
<div class="t" style="right:368px;top:359px;font-size:11.7px;color:#3b3b3b;font-weight:normal;">1</div>
<div class="t" style="right:304px;top:359px;font-size:11.7px;color:#3b3b3b;font-weight:normal;">1</div>
<div class="t" style="right:240.39999999999998px;top:359px;font-size:11.7px;color:#3b3b3b;font-weight:normal;">1</div>
<div class="t" style="right:176px;top:359px;font-size:11.7px;color:#3b3b3b;font-weight:normal;">1</div>
<div class="t" style="right:112px;top:359px;font-size:11.7px;color:#3b3b3b;font-weight:normal;">58.0</div>
<div class="t" style="right:48px;top:359px;font-size:11.7px;color:#3b3b3b;font-weight:normal;">59.0</div>
<div class="t" style="left:593.6px;top:379px;font-size:11.7px;color:#3b3b3b;font-weight:normal;">Maximum</div>
<div class="t" style="right:368px;top:379px;font-size:11.7px;color:#3b3b3b;font-weight:normal;">5</div>
<div class="t" style="right:304px;top:379px;font-size:11.7px;color:#3b3b3b;font-weight:normal;">5</div>
<div class="t" style="right:240.39999999999998px;top:379px;font-size:11.7px;color:#3b3b3b;font-weight:normal;">5</div>
<div class="t" style="right:176px;top:379px;font-size:11.7px;color:#3b3b3b;font-weight:normal;">5</div>
<div class="t" style="right:112px;top:379px;font-size:11.7px;color:#3b3b3b;font-weight:normal;">86.0</div>
<div class="t" style="right:48px;top:379px;font-size:11.7px;color:#3b3b3b;font-weight:normal;">98.0</div>
<div class="r" style="left:586px;top:394px;width:587px;height:2px;background:#333;"></div>
<div class="t" style="left:586px;top:445px;font-size:14.6px;color:#3e6ba8;font-weight:bold;">Frequencies</div>
<div class="t" style="left:610.5px;top:488px;font-size:11.7px;color:#3b3b3b;font-weight:normal;">Frequencies of workshop</div>
<div class="r" style="left:610px;top:499px;width:286px;height:1px;background:#333;"></div>
<div class="t" style="left:642.4px;transform:translateX(-50%);top:512px;font-size:11.7px;color:#3b3b3b;font-weight:normal;">Levels</div>
<div class="t" style="left:706px;transform:translateX(-50%);top:512px;font-size:11.7px;color:#3b3b3b;font-weight:normal;">Counts</div>
<div class="t" style="left:772.4px;transform:translateX(-50%);top:512px;font-size:11.7px;color:#3b3b3b;font-weight:normal;">% of Total</div>
<div class="t" style="left:851.5px;transform:translateX(-50%);top:512px;font-size:11.7px;color:#3b3b3b;font-weight:normal;">Cumulative %</div>
<div class="r" style="left:610px;top:523px;width:286px;height:1px;background:#333;"></div>
<div class="t" style="left:617.8px;top:541px;font-size:11.7px;color:#3b3b3b;font-weight:normal;">R</div>
<div class="t" style="right:488.70000000000005px;top:541px;font-size:11.7px;color:#3b3b3b;font-weight:normal;">31</div>
<div class="t" style="right:412.20000000000005px;top:541px;font-size:11.7px;color:#3b3b3b;font-weight:normal;">31.0&#8201;%</div>
<div class="t" style="right:325px;top:541px;font-size:11.7px;color:#3b3b3b;font-weight:normal;">31.0&#8201;%</div>
<div class="t" style="left:617.8px;top:561px;font-size:11.7px;color:#3b3b3b;font-weight:normal;letter-spacing:-0.7px;">SAS</div>
<div class="t" style="right:488.70000000000005px;top:561px;font-size:11.7px;color:#3b3b3b;font-weight:normal;">25</div>
<div class="t" style="right:412.20000000000005px;top:561px;font-size:11.7px;color:#3b3b3b;font-weight:normal;">25.0&#8201;%</div>
<div class="t" style="right:325px;top:561px;font-size:11.7px;color:#3b3b3b;font-weight:normal;">56.0&#8201;%</div>
<div class="t" style="left:617.8px;top:581px;font-size:11.7px;color:#3b3b3b;font-weight:normal;letter-spacing:-0.7px;">SPSS</div>
<div class="t" style="right:488.70000000000005px;top:581px;font-size:11.7px;color:#3b3b3b;font-weight:normal;">25</div>
<div class="t" style="right:412.20000000000005px;top:581px;font-size:11.7px;color:#3b3b3b;font-weight:normal;">25.0&#8201;%</div>
<div class="t" style="right:325px;top:581px;font-size:11.7px;color:#3b3b3b;font-weight:normal;">81.0&#8201;%</div>
<div class="t" style="left:617.8px;top:601px;font-size:11.7px;color:#3b3b3b;font-weight:normal;">Stata</div>
<div class="t" style="right:488.70000000000005px;top:601px;font-size:11.7px;color:#3b3b3b;font-weight:normal;">19</div>
<div class="t" style="right:412.20000000000005px;top:601px;font-size:11.7px;color:#3b3b3b;font-weight:normal;">19.0&#8201;%</div>
<div class="t" style="right:325px;top:601px;font-size:11.7px;color:#3b3b3b;font-weight:normal;">100.0&#8201;%</div>
<div class="r" style="left:610px;top:616px;width:286px;height:2px;background:#333;"></div>
<div class="r" style="left:1186px;top:140px;width:17px;height:494px;background:#f0f0f0;"></div>
<div class="r" style="left:1188px;top:157px;width:13px;height:17px;background:#c1c1c1;"></div>
<svg class="r" style="left:1190px;top:146px" width="9" height="6" viewBox="0 0 9 6"><path d="M0.5 5 L4.5 1 L8.5 5 Z" fill="#a3a3a3"/></svg>
<svg class="r" style="left:1190px;top:622px" width="9" height="6" viewBox="0 0 9 6"><path d="M0.5 1 L4.5 5 L8.5 1 Z" fill="#505050"/></svg>
<div class="r" style="left:561px;top:634px;width:625px;height:18px;background:#f0f0f0;"></div>
<div class="r" style="left:1186px;top:634px;width:17px;height:18px;background:#fff;"></div>
<div class="r" style="left:578px;top:636px;width:487px;height:13px;background:#c1c1c1;"></div>
<svg class="r" style="left:566px;top:638px" width="6" height="10" viewBox="0 0 6 10"><path d="M5 0.5 L1 4.5 L5 8.5 Z" fill="#a3a3a3"/></svg>
<svg class="r" style="left:1175px;top:638px" width="6" height="10" viewBox="0 0 6 10"><path d="M1 0.5 L5 4.5 L1 8.5 Z" fill="#505050"/></svg>
<div class="r" style="left:0px;top:652px;width:1205px;height:1px;background:#3e6ba8;"></div>
<div class="r" style="left:1204px;top:61px;width:1px;height:592px;background:#3e6ba8;"></div>
<div class="r" style="left:0px;top:61px;width:1px;height:592px;background:#3e6ba8;"></div>
</body></html>
